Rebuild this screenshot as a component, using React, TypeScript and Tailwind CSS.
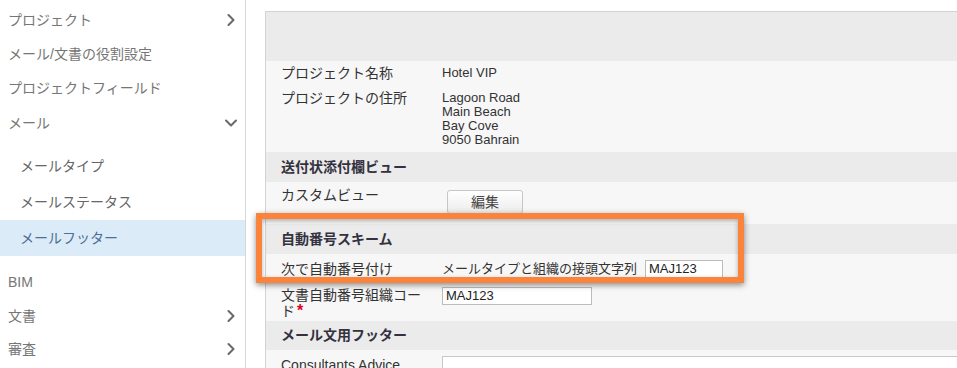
import React from 'react';
import { ChevronRight, ChevronDown } from 'lucide-react';

/**
 * Mail footer settings screen
 * Sidebar menu on the left, settings table on the right, orange call-out over the auto-number block
 */

type NavItem = {
  label: string;
  chevron?: 'right' | 'down';
  height: string;
};

const TOP_ITEMS: NavItem[] = [
  { label: 'プロジェクト', chevron: 'right', height: 'h-[34px]' },
  { label: 'メール/文書の役割設定', height: 'h-[34px]' },
  { label: 'プロジェクトフィールド', height: 'h-[35px]' },
  { label: 'メール', chevron: 'down', height: 'h-[34px]' },
];

const SUB_ITEMS = ['メールタイプ', 'メールステータス', 'メールフッター'];

const BOTTOM_ITEMS: NavItem[] = [
  { label: 'BIM', height: 'h-[34px]' },
  { label: '文書', chevron: 'right', height: 'h-[34px]' },
  { label: '審査', chevron: 'right', height: 'h-[32px]' },
];

function NavRow({ item }: { item: NavItem }) {
  return (
    <div className={`flex items-center justify-between pl-[8px] pr-[4px] text-[14px] text-[#767676] ${item.height}`}>
      <span>{item.label}</span>
      {item.chevron === 'right' && <ChevronRight size={20} strokeWidth={2.5} className="text-[#6a6a6a]" />}
      {item.chevron === 'down' && <ChevronDown size={20} strokeWidth={2.5} className="text-[#6a6a6a]" />}
    </div>
  );
}

function Sidebar() {
  return (
    <div className="w-[246px] h-full border-r border-[#d6d6d6] bg-white pt-[3px] flex-shrink-0">
      {TOP_ITEMS.map((item) => (
        <NavRow key={item.label} item={item} />
      ))}

      {/* Mail sub menu */}
      <div className="pt-[8px]">
        {SUB_ITEMS.map((label) => {
          const isActive = label === 'メールフッター';
          return (
            <div
              key={label}
              className={`h-[36px] flex items-center pl-[20px] text-[14px] ${
                isActive ? 'bg-[#dcebf8] text-[#4d6f96]' : 'text-[#666666]'
              }`}
            >
              {label}
            </div>
          );
        })}
      </div>

      <div className="pt-[9px]">
        {BOTTOM_ITEMS.map((item) => (
          <NavRow key={item.label} item={item} />
        ))}
      </div>
    </div>
  );
}

function SectionHeader({ title, height }: { title: string; height: string }) {
  return (
    <div className={`bg-[#ebebeb] flex items-center pl-[15px] text-[14px] font-bold text-[#33323f] ${height}`}>
      {title}
    </div>
  );
}

function Label({ children }: { children: React.ReactNode }) {
  return <div className="w-[176px] flex-shrink-0 pl-[15px] pr-[19px] text-[14px] text-[#333333]">{children}</div>;
}

function SettingsPanel() {
  return (
    <div className="flex-1 pl-[19px] pt-[11px] min-w-0">
      <div className="border-l border-t border-[#d3d3d3] h-full text-[13px] text-[#333333]">
        {/* Empty title band */}
        <div className="h-[49px] bg-[#ebebeb]" />

        {/* Project info */}
        <div className="bg-[#f7f7f7] pt-[2px] pb-[5px]">
          <div className="flex leading-[20px]">
            <Label>プロジェクト名称</Label>
            <div>Hotel VIP</div>
          </div>
          <div className="flex mt-[8px]">
            <Label>
              <div className="leading-[14px]">プロジェクトの住所</div>
            </Label>
            <div className="leading-[14px]">
              <div>Lagoon Road</div>
              <div>Main Beach</div>
              <div>Bay Cove</div>
              <div>9050 Bahrain</div>
            </div>
          </div>
        </div>

        <SectionHeader title="送付状添付欄ビュー" height="h-[30px]" />

        <div className="bg-[#f7f7f7] h-[42px] flex">
          <Label>
            <div className="pt-[3px] leading-[20px]">カスタムビュー</div>
          </Label>
          <div className="pt-[8px] pl-[5px]">
            <button className="w-[76px] h-[24px] rounded-[3px] border border-[#c6c6c6] bg-gradient-to-b from-white to-[#ececec] text-[14px] text-[#444444]">
              編集
            </button>
          </div>
        </div>

        <SectionHeader title="自動番号スキーム" height="h-[30px]" />

        <div className="bg-[#f7f7f7]">
          <div className="h-[30px] flex items-center">
            <Label>次で自動番号付け</Label>
            <div className="flex items-center">
              <span>メールタイプと組織の接頭文字列</span>
              <input
                readOnly
                value="MAJ123"
                className="ml-[8px] w-[78px] h-[18px] border border-[#bcbcbc] bg-white pl-[3px] text-[13px] text-[#222222] outline-none"
              />
            </div>
          </div>
          <div className="h-[37px] flex pt-[3px]">
            <Label>
              <div className="leading-[16px]">
                文書自動番号組織コード
                <span className="text-[#e0001b] font-bold text-[16px] leading-[16px] ml-[2px]">*</span>
              </div>
            </Label>
            <input
              readOnly
              value="MAJ123"
              className="w-[150px] h-[18px] border border-[#bcbcbc] bg-white pl-[3px] text-[13px] text-[#222222] outline-none"
            />
          </div>
        </div>

        <SectionHeader title="メール文用フッター" height="h-[29px]" />

        <div className="bg-[#f7f7f7] flex pt-[6px] h-[40px]">
          <Label>
            <div className="leading-[16px] pt-[1px]">Consultants Advice</div>
          </Label>
          <div className="flex-1 h-[40px] border-l border-t border-[#c8c8c8] bg-white" />
        </div>
      </div>
    </div>
  );
}

export default function App() {
  return (
    <div className="relative w-[957px] h-[368px] overflow-hidden bg-white font-['Liberation_Sans','Noto_Sans_CJK_JP',sans-serif]">
      <div className="flex h-full">
        <Sidebar />
        <SettingsPanel />
      </div>

      {/* Call-out frame over the auto-number block */}
      <div className="absolute left-[256px] top-[213px] w-[488px] h-[70px] border-[6px] border-[#fb843d] shadow-[0_2px_6px_rgba(0,0,0,0.45),inset_0_2px_5px_rgba(0,0,0,0.3)] pointer-events-none" />
    </div>
  );
}
